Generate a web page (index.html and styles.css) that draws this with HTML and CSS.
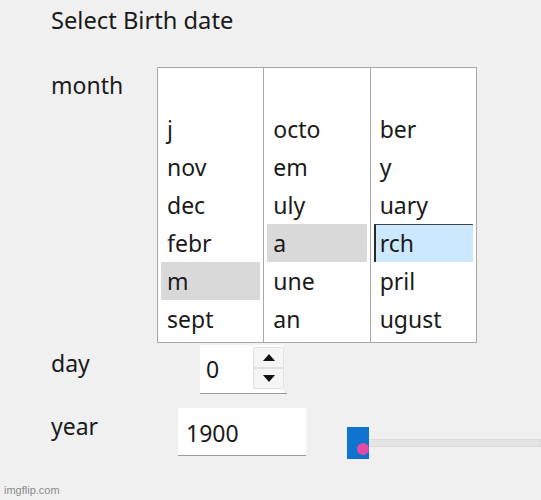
FILE: index.html
```html
<!DOCTYPE html>
<html>
<head>
<meta charset="utf-8">
<link rel="stylesheet" href="styles.css">
</head>
<body>
<div class="form">
  <div class="title">Select Birth date</div>
  <div class="row row-month">
    <div class="label">month</div>
    <div class="listbox">
      <div class="col">
        <div class="item">j</div>
        <div class="item">nov</div>
        <div class="item">dec</div>
        <div class="item">febr</div>
        <div class="item sel">m</div>
        <div class="item">sept</div>
      </div>
      <div class="col">
        <div class="item">octo</div>
        <div class="item">em</div>
        <div class="item">uly</div>
        <div class="item sel">a</div>
        <div class="item">une</div>
        <div class="item">an</div>
      </div>
      <div class="col last">
        <div class="item">ber</div>
        <div class="item">y</div>
        <div class="item">uary</div>
        <div class="item focus">rch</div>
        <div class="item">pril</div>
        <div class="item">ugust</div>
      </div>
    </div>
  </div>
  <div class="row row-day">
    <div class="label">day</div>
    <div class="spinner">
      <div class="spin-value">0</div>
      <div class="spin-buttons">
        <div class="spin-btn"><span class="tri up"></span></div>
        <div class="spin-btn"><span class="tri down"></span></div>
      </div>
    </div>
  </div>
  <div class="row row-year">
    <div class="label">year</div>
    <div class="textbox">1900</div>
    <div class="slider">
      <div class="thumb"><span class="dot"></span></div>
      <div class="track"></div>
    </div>
  </div>
</div>
<div class="watermark">imgflip.com</div>
</body>
</html>
```
FILE: styles.css
```css
html, body {
  margin: 0;
  padding: 0;
  background: #f0f0f0;
}
body {
  width: 541px;
  height: 500px;
  overflow: hidden;
  font-family: "Noto Sans", "Open Sans", sans-serif;
  color: #1a1a1a;
  position: relative;
}
.form {
  padding: 4px 0 0 51px;
  font-size: 23px;
}
.title {
  font-size: 23.7px;
  line-height: 32px;
  height: 32px;
}
.row {
  display: flex;
  align-items: flex-start;
}
.label {
  width: 106px;
  flex: none;
  line-height: 32px;
}
.row-month {
  margin-top: 31px;
}
.row-month .label {
  margin-top: 2px;
}
.listbox {
  display: flex;
  border: 1px solid #a8a8a8;
  background: #fff;
  width: 318px;
}
.col {
  flex: 1;
  padding: 42px 3px 4px 3px;
  border-right: 1px solid #a8a8a8;
}
.col.last {
  border-right: none;
}
.item {
  height: 38px;
  line-height: 38px;
  padding-left: 6px;
  box-sizing: border-box;
}
.item.sel {
  background: #d9d9d9;
}
.item.focus {
  background: #cce8ff;
  border-left: 2px solid #2a2a2a;
  border-top: 1px solid #444;
  padding-left: 4px;
  line-height: 36px;
}
.row-day {
  margin-top: 2px;
}
.row-day .label {
  margin-top: 2px;
}
.spinner {
  display: flex;
  margin-left: 43px;
  border-bottom: 1px solid #9a9a9a;
  padding-right: 3px;
}
.spin-value {
  width: 53px;
  height: 48px;
  line-height: 48px;
  background: #fff;
  padding-left: 6px;
  box-sizing: border-box;
}
.spin-buttons {
  display: flex;
  flex-direction: column;
  padding-top: 2px;
  background: #fff;
}
.spin-btn {
  width: 31px;
  height: 21px;
  border: 1px solid #e2e2e2;
  background: #f5f5f5;
  box-sizing: border-box;
  display: flex;
  align-items: center;
  justify-content: center;
}
.tri {
  width: 0;
  height: 0;
  border-left: 6px solid transparent;
  border-right: 6px solid transparent;
}
.tri.up {
  border-bottom: 7px solid #111;
}
.tri.down {
  border-top: 7px solid #111;
}
.row-year {
  margin-top: 14px;
}
.row-year .label {
  margin-top: 2px;
}
.textbox {
  margin-left: 21px;
  width: 128px;
  height: 48px;
  line-height: 50px;
  background: #fff;
  border-bottom: 1px solid #9a9a9a;
  box-sizing: border-box;
  padding-left: 8px;
}
.slider {
  display: flex;
  align-items: center;
  margin-left: 41px;
  margin-top: 19px;
  flex: 1;
}
.thumb {
  position: relative;
  width: 22px;
  height: 32px;
  background: #0f74cf;
  flex: none;
}
.dot {
  position: absolute;
  width: 12px;
  height: 12px;
  border-radius: 50%;
  background: #e64aa6;
  right: 0;
  bottom: 4px;
}
.track {
  flex: 1;
  height: 6px;
  background: #e4e4e4;
  border: 1px solid #dadada;
  border-left: none;
}
.watermark {
  position: absolute;
  left: 4px;
  top: 484px;
  font-family: "Liberation Sans", Arial, sans-serif;
  font-size: 11px;
  color: #8a8a8a;
}
```
